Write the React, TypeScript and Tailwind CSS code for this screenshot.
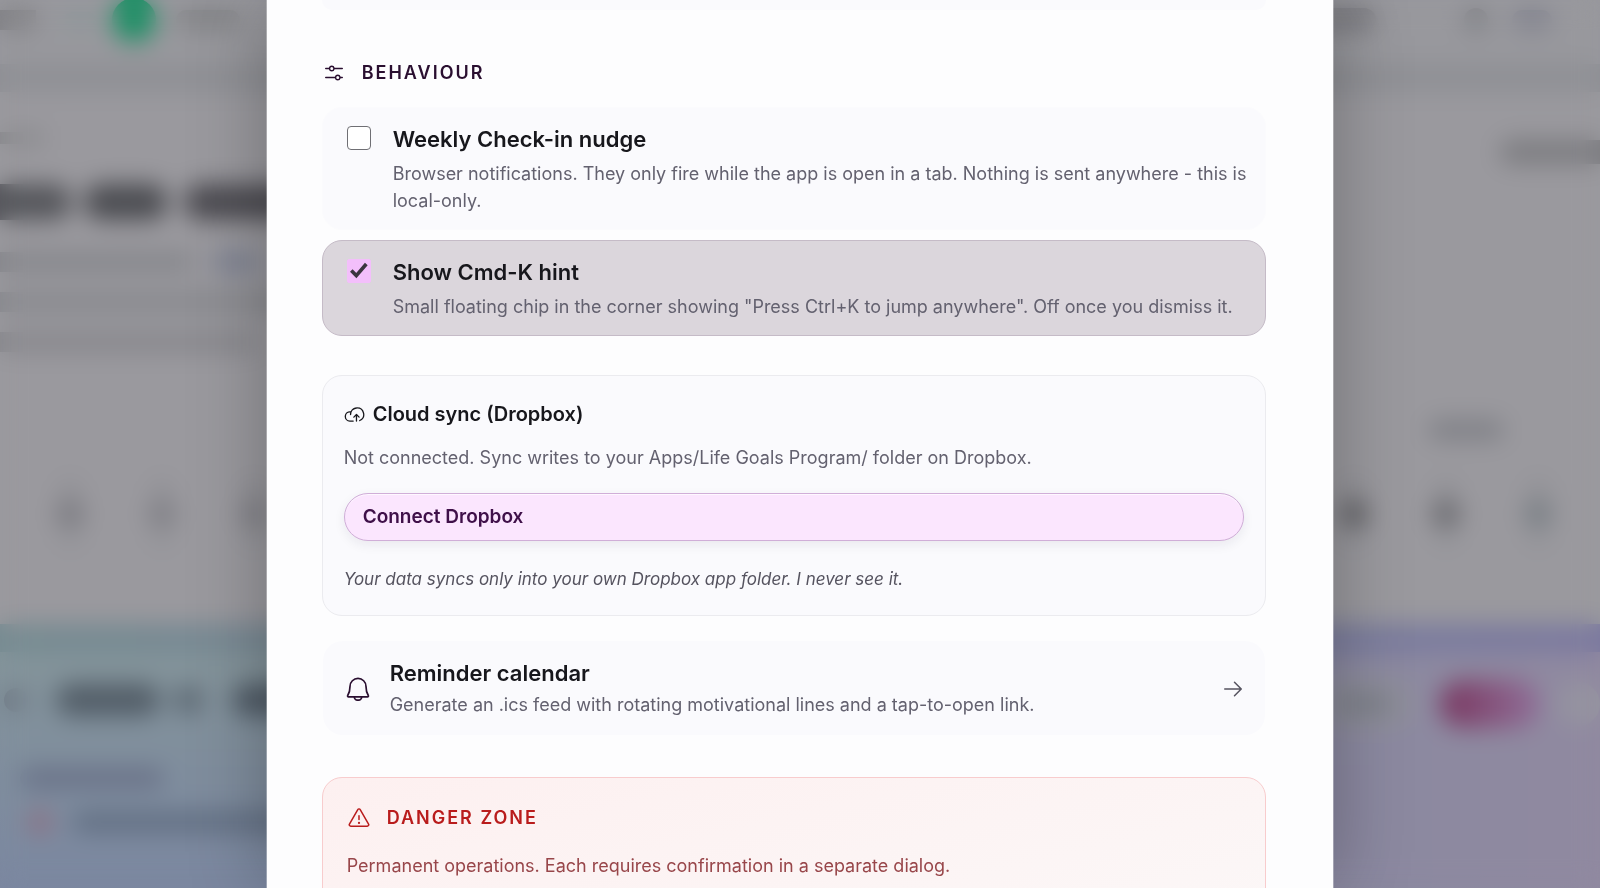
import type { ReactNode } from "react";
import { PiArrowRight, PiCloudArrowUp, PiSlidersHorizontal, PiWarning } from "react-icons/pi";

function DayMark({ tone }: { tone: string }) {
  return (
    <div className="flex w-9 flex-col items-center gap-1">
      <span className="h-4 w-5 rounded-full bg-[#8e8e93]" />
      <span className={`size-7 rounded-full ${tone}`} />
      <span className="h-4 w-5 rounded-full bg-[#919297]" />
    </div>
  );
}

function PageBehind() {
  return (
    <div aria-hidden="true" className="flex h-full flex-col bg-[#9a999e]">
      <header className="flex h-16 shrink-0 justify-between bg-[#98989d]">
        <div className="flex h-10 w-64 items-center">
          <span className="h-5 w-9 bg-[#818185]" />
          <span className="ml-7 h-4 w-8 rounded-full bg-[#8c9699]" />
          <span className="ml-4 size-11 rounded-full bg-[#1f8f66]" />
          <span className="ml-5 h-5 w-16 rounded-full bg-[#828386]" />
        </div>
        <div className="flex h-10 w-72 items-center">
          <span className="h-6 w-16 rounded-full bg-[#7b7b80]" />
          <span className="ml-22 size-6 rounded-full bg-[#7f8085]" />
          <span className="ml-6 h-5 w-10 rounded-full bg-[#82838e]" />
        </div>
      </header>
      <div className="h-7 shrink-0 bg-[#8f9095]" />

      <div className="flex h-86 shrink-0 justify-between pt-10">
        <div className="flex w-80 flex-col">
          <span className="h-3 w-11 bg-[#858689]" />
          <div className="mt-10 flex h-9 gap-3">
            <span className="w-18 rounded-r-full bg-[#55565b]" />
            <span className="w-21 rounded-full bg-[#4b4c51]" />
            <span className="ml-1 w-28 rounded-full bg-[#4c4b51]" />
          </div>
          <div className="mt-8 flex h-5 gap-5">
            <span className="w-48 bg-[#85868b]" />
            <span className="w-12 rounded-full bg-[#7a7f90]" />
          </div>
          <span className="mt-5 h-5 w-72 bg-[#87888d]" />
          <span className="mt-5 h-5 w-64 bg-[#87878c]" />
        </div>
        <div className="flex w-44 flex-col pt-2 pl-19">
          <span className="h-6 w-28 rounded-l-full bg-[#7c7c80]" />
        </div>
      </div>

      <div className="-mt-4 flex h-5 shrink-0 justify-end pr-24">
        <span className="w-19 rounded-full bg-[#7f8086]" />
      </div>
      <div className="flex h-46 shrink-0 justify-between pt-10">
        <div className="flex gap-14 pl-13">
          <DayMark tone="bg-[#7a7a80]" />
          <DayMark tone="bg-[#7e7e84]" />
          <DayMark tone="bg-[#7e7e84]" />
        </div>
        <div className="flex gap-14 pr-11">
          <DayMark tone="bg-[#5f5f63]" />
          <DayMark tone="bg-[#69696e]" />
          <DayMark tone="bg-[#777d83]" />
        </div>
      </div>

      <div className="h-7 shrink-0 bg-linear-to-r from-[#768b91] to-[#7b799f]" />
      <div className="flex grow justify-between bg-linear-to-r from-[#80929a] via-[#7f88a2] to-[#9089a0]">
        <div className="flex w-80 flex-col bg-linear-to-b from-[#84949a] to-[#7b87a0]">
          <div className="mt-8 flex h-8 items-center">
            <span className="ml-1 size-6 rounded-full bg-[#6f7984]" />
            <span className="ml-7 h-8 w-26 rounded-full bg-[#525d67]" />
            <span className="ml-3 h-7 w-8 rounded-full bg-[#5f6b75]" />
            <span className="ml-7 h-8 w-20 rounded-l-full bg-[#4f5a65]" />
          </div>
          <span className="mt-13 ml-5 h-5 w-36 rounded-full bg-[#697187]" />
          <div className="mt-6 flex h-5 items-center">
            <span className="ml-7 size-6 rounded-full bg-[#8d6f82]" />
            <span className="ml-5 h-5 w-54 rounded-l-full bg-[#616e82]" />
          </div>
        </div>
        <div className="flex h-26 w-70 items-center">
          <span className="flex h-14 w-24 items-center rounded-full bg-[#8e8e9a] pl-4">
            <span className="h-5 w-14 rounded-full bg-[#7b7e88]" />
          </span>
          <span className="ml-6 h-12 w-25 rounded-full bg-linear-to-r from-[#78355f] to-[#906f99]" />
          <span className="ml-4 size-11 rounded-full bg-[#9593a0]" />
        </div>
      </div>
    </div>
  );
}

function BellIcon() {
  return (
    <svg
      viewBox="0 0 24 24"
      aria-hidden="true"
      className="size-6 shrink-0 text-[#2a0f30]"
      fill="none"
      stroke="currentColor"
      strokeWidth="1.7"
      strokeLinejoin="round"
    >
      <path d="M12 1.400a8 8 0 0 0-8 8c0 4.400-1.200 7.300-2.300 9.100a.9.9 0 0 0 .8 1.400h19a.9.9 0 0 0 .8-1.400c-1.100-1.800-2.300-4.700-2.300-9.100a8 8 0 0 0-8-8Z" />
      <path d="M8.300 20a3.700 3.200 0 0 0 7.400 0" />
    </svg>
  );
}

type OptionProps = {
  id: string;
  title: string;
  checked?: boolean;
  children: ReactNode;
};

function Option({ id, title, checked = false, children }: OptionProps) {
  return (
    <label
      htmlFor={id}
      className={
        checked
          ? "flex gap-[22px] rounded-[20px] border border-[#c5bbc7] bg-[#dbd6dc] pt-[18px] pr-3 pb-[15px] pl-6"
          : "flex gap-[22px] rounded-[20px] border border-[#fbfbfd] bg-[#fafafd] pt-[18px] pr-3 pb-[15px] pl-6"
      }
    >
      <span className="grid size-6 shrink-0">
        <input
          id={id}
          type="checkbox"
          defaultChecked={checked}
          className="peer col-start-1 row-start-1 size-6 appearance-none rounded-[4px] border border-[#6f6f74] bg-white checked:rounded-[2px] checked:border-[#f3bffb] checked:bg-[#f3bffb]"
        />
        <svg
          viewBox="0 0 24 24"
          aria-hidden="true"
          className="pointer-events-none col-start-1 row-start-1 hidden size-6 peer-checked:block"
        >
          <path d="M4.300 11.600l5 5L19.300 5" fill="none" stroke="#3a353e" strokeWidth="3.600" />
        </svg>
      </span>
      <span className="flex flex-col gap-2">
        <span className="text-[22px] leading-[26px] font-semibold text-[#17171c]">{title}</span>
        <span className="text-[18px] leading-[27px] text-[#63616f]">{children}</span>
      </span>
    </label>
  );
}

export default function App() {
  return (
    <div className="relative h-screen overflow-hidden font-['Inter','Liberation_Sans',sans-serif]">
      <PageBehind />
      <div className="absolute inset-0 flex justify-center backdrop-blur-[12px]">
        <main
          role="dialog"
          aria-label="Settings"
          className="h-full w-2/3 overflow-hidden bg-[#fdfdfe] pr-[67px] pl-[55px] shadow-[0_0_72px_rgba(0,0,0,0.28)] ring-1 ring-white/30"
        >
          <div className="h-[10px] rounded-b-[20px] bg-[#fafafd]" />

          <section aria-labelledby="behaviour">
            <div className="mt-[51px] flex h-6 items-center gap-4 text-[#2a0f30]">
              <PiSlidersHorizontal className="size-6" />
              <h2 id="behaviour" className="text-[18px] leading-6 font-semibold tracking-[2px]">
                BEHAVIOUR
              </h2>
            </div>
            <div className="mt-[22px] flex flex-col gap-[10px]">
              <Option id="nudge" title="Weekly Check-in nudge">
                Browser notifications. They only fire while the app is open in a tab. Nothing is sent
                anywhere - this is local-only.
              </Option>
              <Option id="hint" title="Show Cmd-K hint" checked>
                Small floating chip in the corner showing "Press Ctrl+K to jump anywhere". Off once
                you dismiss it.
              </Option>
            </div>
          </section>

          <section
            aria-labelledby="cloud"
            className="mt-[39px] rounded-[20px] border border-[#ebebef] bg-[#fafafd] px-[21px] pt-6 pb-[22px]"
          >
            <div className="flex items-center gap-2 text-[#17171c]">
              <PiCloudArrowUp className="size-[21px]" />
              <h3 id="cloud" className="text-[20px] leading-7 font-semibold">
                Cloud sync (Dropbox)
              </h3>
            </div>
            <p className="mt-4 text-[18px] leading-[27px] text-[#63616f]">
              Not connected. Sync writes to your Apps/Life Goals Program/ folder on Dropbox.
            </p>
            <button
              type="button"
              className="mt-[22px] flex h-12 w-full items-center rounded-full border border-[#d0aed8] bg-[#fbe6fe] px-[18px] text-[19px] font-semibold text-[#3f1049] shadow-[0_4px_12px_rgba(30,20,50,0.07),inset_0_1px_0_rgba(255,255,255,0.7)]"
            >
              Connect Dropbox
            </button>
            <p className="mt-[25px] text-[17px] leading-[27px] text-[#55535f] italic">
              Your data syncs only into your own Dropbox app folder. I never see it.
            </p>
          </section>

          <button
            type="button"
            className="mx-px mt-[25px] flex w-[calc(100%-2px)] items-center rounded-[20px] bg-[#fafafd] pt-[18px] pr-5 pb-[17px] pl-[23px] text-left"
          >
            <BellIcon />
            <span className="ml-5 flex grow flex-col gap-1">
              <span className="text-[22px] leading-7 font-semibold text-[#17171c]">
                Reminder calendar
              </span>
              <span className="text-[18px] leading-[27px] text-[#63616f]">
                Generate an .ics feed with rotating motivational lines and a tap-to-open link.
              </span>
            </span>
            <PiArrowRight className="size-6 shrink-0 text-[#55535f]" />
          </button>

          <section
            aria-labelledby="danger"
            className="mt-[42px] h-60 rounded-[20px] border border-[#f8cccd] bg-linear-to-br from-[#fdf0f0] to-[#fbf9f9] px-6 pt-7"
          >
            <div className="flex items-center gap-4 text-[#b91c1c]">
              <PiWarning className="size-6" />
              <h2 id="danger" className="text-[18px] leading-6 font-semibold tracking-[2px]">
                DANGER ZONE
              </h2>
            </div>
            <p className="mt-[22px] text-[18px] leading-[27px] text-[#98464a]">
              Permanent operations. Each requires confirmation in a separate dialog.
            </p>
          </section>
        </main>
      </div>
    </div>
  );
}
